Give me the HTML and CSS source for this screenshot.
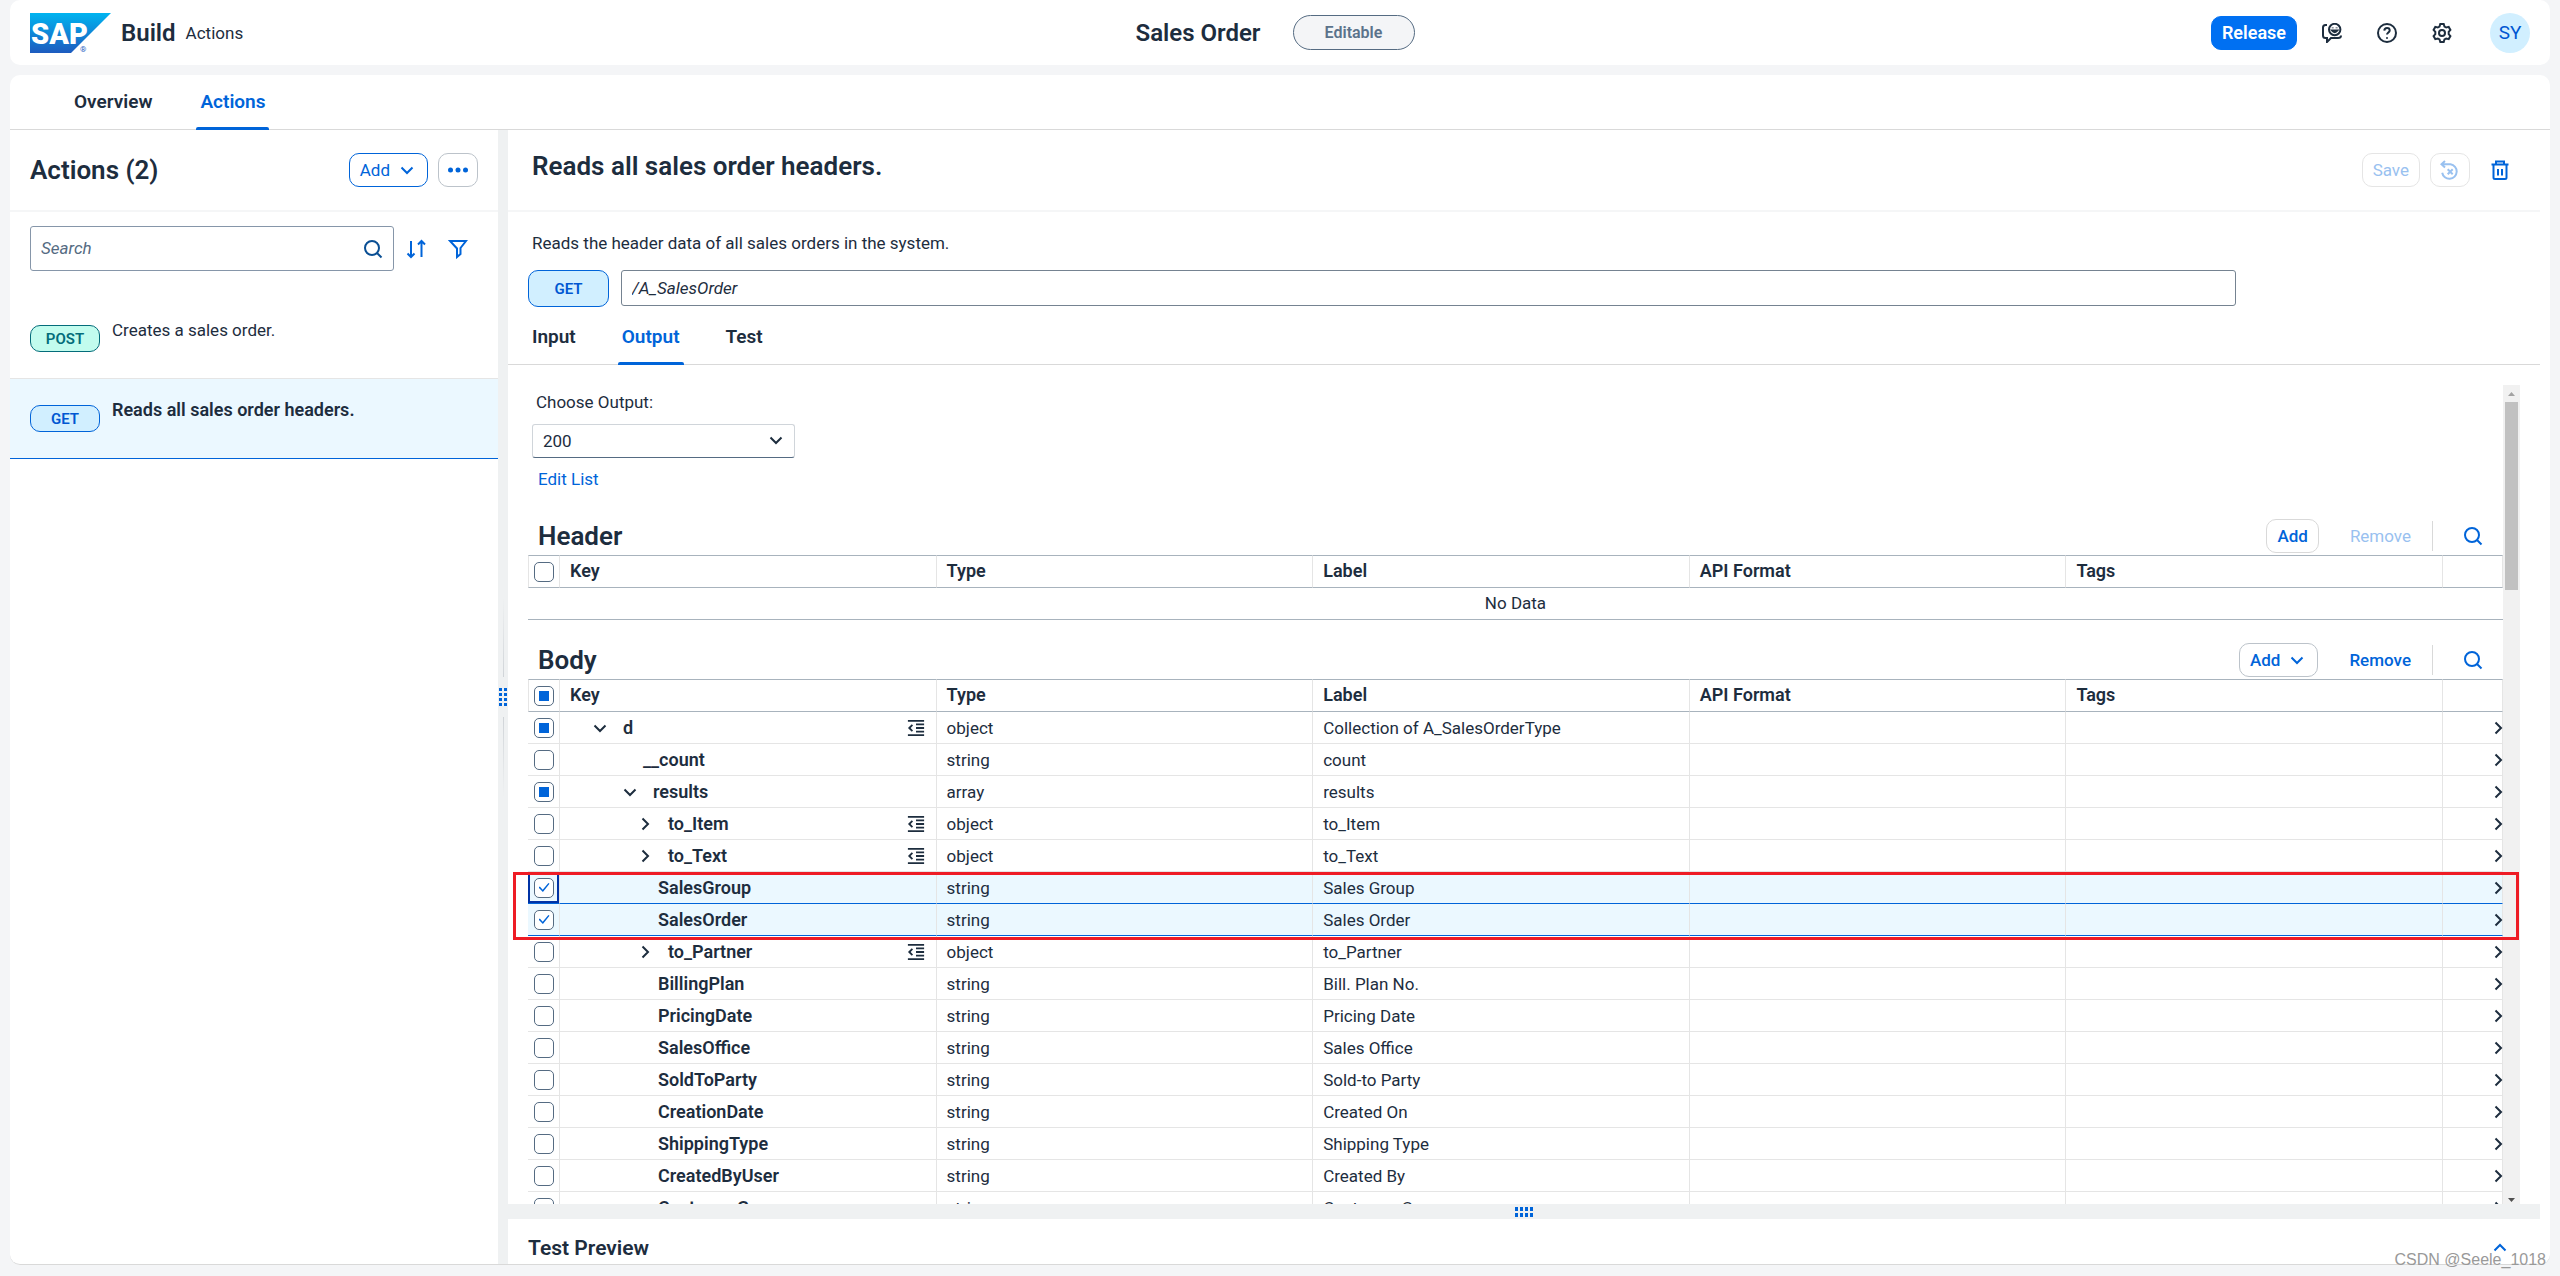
FILE: index.html
```html
<!DOCTYPE html>
<html lang="en">
<head>
<meta charset="utf-8">
<title>Sales Order - SAP Build Actions</title>
<link rel="stylesheet" href="styles.css">
</head>
<body>
<svg class="sprite" aria-hidden="true">
  <symbol id="i-down" viewBox="0 0 20 20"><path d="M4.500 7.500 10 13 15.500 7.500"/></symbol>
  <symbol id="i-right" viewBox="0 0 20 20"><path d="M7.500 4.500 13 10 7.500 15.500"/></symbol>
  <symbol id="i-up" viewBox="0 0 20 20"><path d="M4.500 12.500 10 7 15.500 12.500"/></symbol>
  <symbol id="i-search" viewBox="0 0 20 20"><circle cx="9" cy="9" r="7"/><path d="m14 14 4.500 4.500"/></symbol>
  <symbol id="i-sort" viewBox="0 0 20 20"><path d="M5 2v16M1.500 14.500 5 18l3.500-3.500M15.500 18V2M12 5.500 15.500 2 19 5.500"/></symbol>
  <symbol id="i-filter" viewBox="0 0 20 20"><path d="M2 2h16l-5.500 7v6L9 18V9.500L2 2Z"/></symbol>
  <symbol id="i-help" viewBox="0 0 20 20"><circle cx="10" cy="10" r="9"/><path d="M7.300 7.600C7.500 4 12.700 4.200 12.700 7.400c0 2-2.700 2.200-2.700 4.200"/><path d="M10 14.200v1.600"/></symbol>
  <symbol id="i-gear" viewBox="0 0 20 20"><path d="M8.300 1h3.400l.8 2.500 1.700 1 2.500-.6 1.700 3-1.700 1.900v2.400l1.700 1.900-1.700 3-2.500-.6-1.700 1-.8 2.500H8.300l-.8-2.500-1.700-1-2.500.6-1.700-3 1.700-1.900V8.800L1.600 6.900l1.700-3 2.500.6 1.700-1L8.300 1Z"/><circle cx="10" cy="10" r="3"/></symbol>
  <symbol id="i-feedback" viewBox="0 0 20 20"><path d="M5 2H3.500Q1 2 1 4.500v8Q1 15 3.500 15H5v4l4-4h7q3 0 3-2.500"/><circle cx="12.700" cy="6.500" r="5.700"/><path d="M10 7.500q2.700 3.500 5.400 0Z" fill="currentColor"/><path d="M10.700 4.600v.6M14.600 4.600v.6"/></symbol>
  <symbol id="i-reset" viewBox="0 0 20 20"><path d="M5 1 1.500 4.300 5 7.500M2 4.300h8.500a7.300 7.300 0 1 1-8.300 8.500"/><path d="m7.700 9.200 5 5M12.700 9.200l-5 5"/></symbol>
  <symbol id="i-trash" viewBox="0 0 20 20"><path d="M1.500 4.500h17M6 4.500V1.500h8v3M3.500 4.500v13q0 1.500 1.500 1.500h10q1.500 0 1.500-1.500v-13M8 9v6.500M12 9v6.500"/></symbol>
  <symbol id="i-indent" viewBox="0 0 20 20"><path d="M1 2h18M10 6h9M10 10h9M10 14h9M1 18h18M6 6.500 2.500 10 6 13.500"/></symbol>
  <symbol id="i-more" viewBox="0 0 20 20"><g fill="currentColor" stroke="none"><circle cx="2.500" cy="10" r="2.500"/><circle cx="10" cy="10" r="2.500"/><circle cx="17.500" cy="10" r="2.500"/></g></symbol>
</svg>

<div class="app">
  <header class="shell">
    <div class="brand">
      <svg class="logo" viewBox="0 0 81 40" role="img" aria-label="SAP">
        <defs><linearGradient id="sap" x1="0" y1="0" x2="0" y2="1"><stop offset="0" stop-color="#00b4f0"/><stop offset="1" stop-color="#1d5bbf"/></linearGradient></defs>
        <path d="M0 0h81L41 40H0Z" fill="url(#sap)"/>
        <text class="logo-word" x="1" y="31">SAP</text>
        <text class="logo-mark" x="50" y="39">®</text>
      </svg>
      <span class="product">Build</span>
      <span class="area">Actions</span>
    </div>
    <div class="shell-title">
      <h1 class="title">Sales Order</h1>
      <span class="state">Editable</span>
    </div>
    <div class="shell-tools">
      <button class="btn primary">Release</button>
      <button class="tool" aria-label="Feedback"><svg class="icon"><use href="#i-feedback"/></svg></button>
      <button class="tool" aria-label="Help"><svg class="icon"><use href="#i-help"/></svg></button>
      <button class="tool" aria-label="Settings"><svg class="icon"><use href="#i-gear"/></svg></button>
      <button class="avatar" aria-label="User SY">SY</button>
    </div>
  </header>

  <main class="main">
    <nav class="tabs top-tabs">
      <a class="tab" href="#overview">Overview</a>
      <a class="tab active" href="#actions">Actions</a>
    </nav>
    <div class="split">
      <aside class="side">
        <div class="side-head">
          <h2 class="heading">Actions (2)</h2>
          <button class="btn strong">Add <svg class="icon"><use href="#i-down"/></svg></button>
          <button class="btn square" aria-label="More"><svg class="icon"><use href="#i-more"/></svg></button>
        </div>
        <div class="side-search">
          <div class="search">
            <input class="search-input" type="search" placeholder="Search" aria-label="Search">
            <svg class="icon"><use href="#i-search"/></svg>
          </div>
          <button class="tool link" aria-label="Sort"><svg class="icon"><use href="#i-sort"/></svg></button>
          <button class="tool link" aria-label="Filter"><svg class="icon"><use href="#i-filter"/></svg></button>
        </div>
        <ul class="list">
          <li class="item"><span class="badge post">POST</span><span class="item-text">Creates a sales order.</span></li>
          <li class="item selected"><span class="badge">GET</span><span class="item-text">Reads all sales order headers.</span></li>
        </ul>
      </aside>

      <div class="gutter"><span class="line up"></span><span class="grip tall"></span><span class="line"></span></div>

      <section class="detail">
        <div class="detail-head">
          <h2 class="heading">Reads all sales order headers.</h2>
          <button class="btn" disabled>Save</button>
          <button class="btn square" disabled aria-label="Reset"><svg class="icon"><use href="#i-reset"/></svg></button>
          <button class="btn square plain" aria-label="Delete"><svg class="icon"><use href="#i-trash"/></svg></button>
        </div>
        <p class="desc">Reads the header data of all sales orders in the system.</p>
        <div class="endpoint">
          <span class="badge big">GET</span>
          <input class="path" type="text" value="/A_SalesOrder" aria-label="Path">
        </div>
        <nav class="tabs sub-tabs">
          <a class="tab" href="#input">Input</a>
          <a class="tab active" href="#output">Output</a>
          <a class="tab" href="#test">Test</a>
        </nav>

        <div class="scroll">
          <div class="content">
            <div class="choose">
              <label class="choose-label" for="output">Choose Output:</label>
              <div class="select">
                <select id="output" class="select-box"><option>200</option></select>
                <svg class="icon"><use href="#i-down"/></svg>
              </div>
              <a class="edit" href="#edit">Edit List</a>
            </div>

            <div class="bar">
              <h3 class="heading">Header</h3>
              <button class="btn soft">Add</button>
              <button class="btn plain" disabled>Remove</button>
              <span class="sep"></span>
              <button class="btn square plain" aria-label="Search headers"><svg class="icon"><use href="#i-search"/></svg></button>
            </div>
            <table class="grid">
              <colgroup><col class="c-check"><col><col><col><col><col><col class="c-nav"></colgroup>
              <thead><tr><th><input type="checkbox" class="check" aria-label="Select all headers"></th><th>Key</th><th>Type</th><th>Label</th><th>API Format</th><th>Tags</th><th></th></tr></thead>
              <tbody><tr class="empty"><td colspan="7">No Data</td></tr></tbody>
            </table>

            <div class="bar body-bar">
              <h3 class="heading">Body</h3>
              <button class="btn">Add <svg class="icon"><use href="#i-down"/></svg></button>
              <button class="btn plain">Remove</button>
              <span class="sep"></span>
              <button class="btn square plain" aria-label="Search body"><svg class="icon"><use href="#i-search"/></svg></button>
            </div>
            <div class="grid-wrap">
              <table class="grid">
                <colgroup><col class="c-check"><col><col><col><col><col><col class="c-nav"></colgroup>
                <thead><tr><th><input type="checkbox" class="check mixed" aria-label="Select all"></th><th>Key</th><th>Type</th><th>Label</th><th>API Format</th><th>Tags</th><th></th></tr></thead>
                <tbody>
                  <tr><td><input type="checkbox" class="check mixed" aria-label="d"></td><td><div class="key l1"><svg class="icon"><use href="#i-down"/></svg><span class="name">d</span><svg class="icon indent"><use href="#i-indent"/></svg></div></td><td>object</td><td>Collection of A_SalesOrderType</td><td></td><td></td><td><svg class="icon"><use href="#i-right"/></svg></td></tr>
                  <tr><td><input type="checkbox" class="check" aria-label="__count"></td><td><div class="key leaf2"><span class="name">__count</span></div></td><td>string</td><td>count</td><td></td><td></td><td><svg class="icon"><use href="#i-right"/></svg></td></tr>
                  <tr><td><input type="checkbox" class="check mixed" aria-label="results"></td><td><div class="key l2"><svg class="icon"><use href="#i-down"/></svg><span class="name">results</span></div></td><td>array</td><td>results</td><td></td><td></td><td><svg class="icon"><use href="#i-right"/></svg></td></tr>
                  <tr><td><input type="checkbox" class="check" aria-label="to_Item"></td><td><div class="key l3"><svg class="icon"><use href="#i-right"/></svg><span class="name">to_Item</span><svg class="icon indent"><use href="#i-indent"/></svg></div></td><td>object</td><td>to_Item</td><td></td><td></td><td><svg class="icon"><use href="#i-right"/></svg></td></tr>
                  <tr><td><input type="checkbox" class="check" aria-label="to_Text"></td><td><div class="key l3"><svg class="icon"><use href="#i-right"/></svg><span class="name">to_Text</span><svg class="icon indent"><use href="#i-indent"/></svg></div></td><td>object</td><td>to_Text</td><td></td><td></td><td><svg class="icon"><use href="#i-right"/></svg></td></tr>
                  <tr class="picked"><td class="focus"><input type="checkbox" class="check" checked aria-label="SalesGroup"></td><td><div class="key leaf3"><span class="name">SalesGroup</span></div></td><td>string</td><td>Sales Group</td><td></td><td></td><td><svg class="icon"><use href="#i-right"/></svg></td></tr>
                  <tr class="picked"><td><input type="checkbox" class="check" checked aria-label="SalesOrder"></td><td><div class="key leaf3"><span class="name">SalesOrder</span></div></td><td>string</td><td>Sales Order</td><td></td><td></td><td><svg class="icon"><use href="#i-right"/></svg></td></tr>
                  <tr><td><input type="checkbox" class="check" aria-label="to_Partner"></td><td><div class="key l3"><svg class="icon"><use href="#i-right"/></svg><span class="name">to_Partner</span><svg class="icon indent"><use href="#i-indent"/></svg></div></td><td>object</td><td>to_Partner</td><td></td><td></td><td><svg class="icon"><use href="#i-right"/></svg></td></tr>
                  <tr><td><input type="checkbox" class="check" aria-label="BillingPlan"></td><td><div class="key leaf3"><span class="name">BillingPlan</span></div></td><td>string</td><td>Bill. Plan No.</td><td></td><td></td><td><svg class="icon"><use href="#i-right"/></svg></td></tr>
                  <tr><td><input type="checkbox" class="check" aria-label="PricingDate"></td><td><div class="key leaf3"><span class="name">PricingDate</span></div></td><td>string</td><td>Pricing Date</td><td></td><td></td><td><svg class="icon"><use href="#i-right"/></svg></td></tr>
                  <tr><td><input type="checkbox" class="check" aria-label="SalesOffice"></td><td><div class="key leaf3"><span class="name">SalesOffice</span></div></td><td>string</td><td>Sales Office</td><td></td><td></td><td><svg class="icon"><use href="#i-right"/></svg></td></tr>
                  <tr><td><input type="checkbox" class="check" aria-label="SoldToParty"></td><td><div class="key leaf3"><span class="name">SoldToParty</span></div></td><td>string</td><td>Sold-to Party</td><td></td><td></td><td><svg class="icon"><use href="#i-right"/></svg></td></tr>
                  <tr><td><input type="checkbox" class="check" aria-label="CreationDate"></td><td><div class="key leaf3"><span class="name">CreationDate</span></div></td><td>string</td><td>Created On</td><td></td><td></td><td><svg class="icon"><use href="#i-right"/></svg></td></tr>
                  <tr><td><input type="checkbox" class="check" aria-label="ShippingType"></td><td><div class="key leaf3"><span class="name">ShippingType</span></div></td><td>string</td><td>Shipping Type</td><td></td><td></td><td><svg class="icon"><use href="#i-right"/></svg></td></tr>
                  <tr><td><input type="checkbox" class="check" aria-label="CreatedByUser"></td><td><div class="key leaf3"><span class="name">CreatedByUser</span></div></td><td>string</td><td>Created By</td><td></td><td></td><td><svg class="icon"><use href="#i-right"/></svg></td></tr>
                  <tr><td><input type="checkbox" class="check" aria-label="CustomerGroup"></td><td><div class="key leaf3"><span class="name">CustomerGroup</span></div></td><td>string</td><td>Customer Group</td><td></td><td></td><td><svg class="icon"><use href="#i-right"/></svg></td></tr>
                </tbody>
              </table>
              <div class="callout"></div>
            </div>
          </div>
          <div class="scrollbar"><span class="arrow"></span><span class="thumb"></span><span class="arrow down"></span></div>
        </div>

        <div class="row-gutter"><span class="grip"></span></div>
        <div class="preview">
          <h3 class="preview-title">Test Preview</h3>
          <button class="tool link" aria-label="Expand"><svg class="icon"><use href="#i-up"/></svg></button>
        </div>
      </section>
    </div>
  </main>
  <div class="watermark">CSDN @Seele_1018</div>
</div>
</body>
</html>
```
FILE: styles.css
```css
* { box-sizing: border-box; }

body {
  margin: 0;
  background: #f4f5f7;
  color: #1d2d3e;
  font: 17px/24px Roboto, "Liberation Sans", sans-serif;
}

h1, h2, h3, p, ul { margin: 0; padding: 0; }
button, input, select { font: inherit; color: inherit; margin: 0; }
a { color: inherit; text-decoration: none; }

.sprite { position: absolute; width: 0; height: 0; }

.icon {
  display: block;
  width: 20px;
  height: 20px;
  flex: none;
  fill: none;
  stroke: currentColor;
  stroke-width: 2;
}

.app {
  position: relative;
  display: flex;
  flex-direction: column;
  gap: 10px;
  height: 100vh;
  padding: 0 10px 11px;
}

/* Shell bar */
.shell {
  display: grid;
  grid-template-columns: 1fr auto 1fr;
  align-items: center;
  height: 65px;
  flex: none;
  padding: 0 20px;
  background: #fff;
  border-radius: 10px;
}

.brand { display: flex; align-items: center; }
.logo { width: 81px; height: 40px; }
.logo-word { font: 900 29px Roboto, "Liberation Sans", sans-serif; fill: #fff; }
.logo-mark { font: 8px Roboto, "Liberation Sans", sans-serif; fill: #1d5bbf; }
.product { margin-left: 10px; font-size: 24px; font-weight: 600; }
.area { margin-left: 10px; }

.shell-title { display: flex; align-items: center; gap: 32px; padding-right: 10px; }
.title { font-size: 24px; font-weight: 600; }
.state {
  width: 122px;
  height: 35px;
  border: 1px solid #556b82;
  border-radius: 18px;
  background: #f4f5f7;
  color: #5b738b;
  font-size: 16px;
  font-weight: 600;
  line-height: 33px;
  text-align: center;
}

.shell-tools { display: flex; align-items: center; justify-content: flex-end; }
.tool {
  display: flex;
  align-items: center;
  justify-content: center;
  width: 40px;
  height: 34px;
  padding: 0;
  border: 0;
  background: none;
}
.shell-tools .tool { margin-left: 15px; }
.tool.link { color: #0064d9; }
.avatar {
  width: 40px;
  height: 40px;
  margin-left: 28px;
  padding: 0;
  border: 0;
  border-radius: 50%;
  background: #d1efff;
  color: #0057d2;
  font-size: 19px;
}

/* Buttons */
.btn {
  display: flex;
  align-items: center;
  justify-content: center;
  gap: 7px;
  height: 34px;
  padding: 0 10px;
  border: 1px solid #bcc3ca;
  border-radius: 10px;
  background: #fff;
  color: #0064d9;
  line-height: 20px;
}
.btn.primary { border-color: #0070f2; background: #0070f2; color: #fff; font-size: 18px; font-weight: 600; }
.btn.strong { border-color: #0064d9; }
.btn.soft { border-color: #d9d9d9; }
.btn.plain { border-color: transparent; background: none; }
.btn.square { width: 40px; padding: 0; }
.btn:disabled { color: #99c1f0; }
.btn:disabled:not(.plain) { border-color: #e5e5e5; }
.bar .btn:not(:disabled) { font-weight: 500; }

/* Tabs */
.tabs { display: flex; border-bottom: 1px solid #d9d9d9; flex: none; }
.tab { position: relative; padding: 0 4px; font-size: 19px; font-weight: 600; }
.tab.active { color: #0064d9; }
.tab.active::after {
  content: "";
  position: absolute;
  left: 0;
  right: 0;
  bottom: -1px;
  height: 3px;
  border-radius: 2px 2px 0 0;
  background: #0064d9;
}
.top-tabs { gap: 40px; padding: 0 60px; height: 55px; line-height: 54px; }

/* Main area */
.main {
  display: flex;
  flex-direction: column;
  flex: 1;
  min-height: 0;
  background: #fff;
  border-bottom: 1px solid #d9d9d9;
  border-radius: 10px;
  overflow: hidden;
}
.split { display: flex; flex: 1; min-height: 0; }
.heading { font-size: 26px; font-weight: 600; line-height: 32px; }

/* Action list */
.side { width: 488px; flex: none; }
.side-head {
  display: flex;
  align-items: center;
  gap: 10px;
  height: 82px;
  padding: 0 20px;
  border-bottom: 2px solid #f5f6f7;
}
.side-head .heading { flex: 1; }
.side-search { display: flex; align-items: center; padding: 14px 20px 28px; gap: 2px; }
.search {
  display: flex;
  align-items: center;
  flex: 1;
  height: 45px;
  padding: 0 10px;
  border: 1px solid #8696a9;
  border-radius: 3px;
  color: #0a4f94;
}
.search-input { flex: 1; min-width: 0; padding: 0 0 2px; border: 0; outline: 0; background: none; }
.search-input::placeholder { color: #556b82; font-style: italic; opacity: 1; }
.list { list-style: none; }
.item {
  display: flex;
  gap: 12px;
  height: 80px;
  padding: 19px 20px 0;
  border-bottom: 1px solid #e5e5e5;
}
.item.selected { background: #ebf8ff; border-color: #0064d9; font-size: 18px; font-weight: 600; }
.badge {
  width: 70px;
  height: 27px;
  margin-top: 7px;
  flex: none;
  border: 1px solid #0064d9;
  border-radius: 10px;
  background: #d1efff;
  color: #0057d2;
  font-size: 15px;
  font-weight: 600;
  line-height: 26px;
  text-align: center;
}
.badge.post { border-color: #046c7a; background: #c2fcee; color: #046c7a; }
.badge.big { width: 81px; height: 37px; margin: 0; line-height: 36px; }

/* Splitter handles */
.gutter {
  display: flex;
  flex-direction: column;
  align-items: center;
  justify-content: center;
  gap: 10px;
  width: 10px;
  flex: none;
  background: #eff1f2;
}
.line { width: 1px; height: 80px; background: linear-gradient(#d0d4d8, transparent); }
.line.up { background: linear-gradient(transparent, #d0d4d8); }
.grip {
  width: 20px;
  height: 12px;
  background: radial-gradient(circle at center, #0064d9 2px, transparent 2px) 0 0 / 5px 6px;
}
.grip.tall { width: 10px; height: 20px; background-size: 5px 5px; }
.row-gutter {
  display: flex;
  align-items: center;
  justify-content: center;
  height: 15px;
  margin-right: 10px;
  flex: none;
  background: #eff1f2;
}

/* Detail */
.detail { display: flex; flex-direction: column; flex: 1; min-width: 0; }
.detail-head {
  display: flex;
  align-items: center;
  gap: 10px;
  height: 82px;
  flex: none;
  margin-right: 10px;
  padding: 0 20px 0 24px;
  border-bottom: 2px solid #f5f6f7;
}
.detail-head .heading { flex: 1; padding-bottom: 8px; }
.desc { padding: 19px 24px 15px; }
.endpoint { display: flex; gap: 12px; padding: 0 314px 0 20px; }
.path {
  flex: 1;
  height: 36px;
  padding: 0 10px;
  border: 1px solid #758391;
  border-radius: 3px;
  font-style: italic;
}
.sub-tabs { gap: 38px; height: 58px; margin-right: 10px; padding: 0 20px; line-height: 60px; }

.scroll { display: flex; flex: 1; min-height: 0; margin: 20px 30px 0 0; overflow: hidden; }
.content { flex: 1; min-width: 0; padding-left: 20px; }
.choose { display: flex; flex-direction: column; align-items: flex-start; padding: 5px 0 0 4px; }
.choose-label { padding: 0 4px; }
.select { position: relative; width: 263px; margin: 10px 0 9px; }
.select-box {
  display: block;
  width: 100%;
  height: 34px;
  padding: 0 10px;
  appearance: none;
  border: 1px solid #d0d5da;
  border-bottom-color: #556b82;
  border-radius: 3px;
  background: #fff;
}
.select .icon { position: absolute; right: 9px; top: 6px; pointer-events: none; }
.edit { padding: 0 6px; color: #0064d9; }

.bar { display: flex; align-items: center; height: 34px; margin: 28px 10px 2px; }
.bar .heading { flex: 1; }
.bar .btn { margin-left: 20px; }
.bar .sep { width: 1px; height: 30px; margin-left: 10px; background: #d9d9d9; }
.bar .sep + .btn { margin-left: 20px; }
.body-bar { margin-top: 23px; }

/* Data grid */
.grid { width: 100%; table-layout: fixed; border-collapse: separate; border-spacing: 0; }
.c-check { width: 32px; }
.c-nav { width: 60px; }
.grid th, .grid td {
  height: 32px;
  padding: 0 10px;
  border-right: 1px solid #e5e5e5;
  border-bottom: 1px solid #e5e5e5;
  text-align: left;
  line-height: 24px;
  white-space: nowrap;
}
.grid th {
  height: 33px;
  padding-bottom: 2px;
  border-top: 1px solid #a8b3bd;
  border-bottom-color: #a8b3bd;
  font-size: 18px;
  font-weight: 600;
}
.grid th:first-child { border-left: 1px solid #e5e5e5; }
.grid th:first-child, .grid td:first-child { padding: 0 0 0 6px; }
.grid td:last-child { padding: 0; }
.grid td:last-child .icon { margin-left: auto; margin-right: -6px; }
.grid .empty td { padding-bottom: 2px; border-right: 0; border-color: #a8b3bd; text-align: center; }
.grid .picked td { background: #ebf8ff; border-bottom-color: #0064d9; }
.grid .picked .focus { box-shadow: inset 0 0 0 2px #0032a5; }
.grid th:first-child { padding-left: 5px; }

.check {
  display: grid;
  place-content: center;
  width: 20px;
  height: 20px;
  appearance: none;
  border: 1px solid #556b82;
  border-radius: 5px;
  background: #fff;
}
.check.mixed::before { content: ""; width: 10px; height: 10px; background: #0064d9; }
.check:checked::before {
  content: "";
  width: 11px;
  height: 9px;
  background: #0064d9;
  clip-path: polygon(0 50%, 12% 40%, 38% 76%, 90% 0, 100% 8%, 40% 100%);
}

.key { display: flex; align-items: center; font-size: 18px; font-weight: 600; }
.name { flex: 1; }
.key .icon + .name { padding-left: 13px; }
.key.l1 { padding-left: 20px; }
.key.l2 { padding-left: 50px; }
.key.l3 { padding-left: 65px; }
.key.leaf2 { padding-left: 73px; }
.key.leaf3 { padding-left: 88px; }
.key .indent { width: 18px; height: 18px; margin-right: 1px; }

.grid-wrap { position: relative; }
.callout {
  position: absolute;
  top: 193px;
  left: -15px;
  right: -16px;
  height: 68px;
  border: 3px solid #ee1c25;
}

.scrollbar {
  display: flex;
  flex-direction: column;
  align-items: center;
  width: 17px;
  flex: none;
  background: #f1f1f1;
}
.arrow { width: 7px; height: 4px; margin: 7px 0 6px; background: #a3a3a3; clip-path: polygon(50% 0, 100% 100%, 0 100%); }
.arrow.down { margin: auto 0 2px; background: #505050; clip-path: polygon(0 0, 100% 0, 50% 100%); }
.thumb { width: 13px; height: 188px; background: #c1c1c1; }

.preview {
  display: flex;
  align-items: center;
  height: 45px;
  flex: none;
  padding: 12px 30px 0 20px;
}
.preview-title { flex: 1; font-size: 21px; font-weight: 600; }

.watermark {
  position: absolute;
  right: 14px;
  bottom: 4px;
  color: #999;
  font: 16px/24px "Liberation Sans", sans-serif;
}
```
